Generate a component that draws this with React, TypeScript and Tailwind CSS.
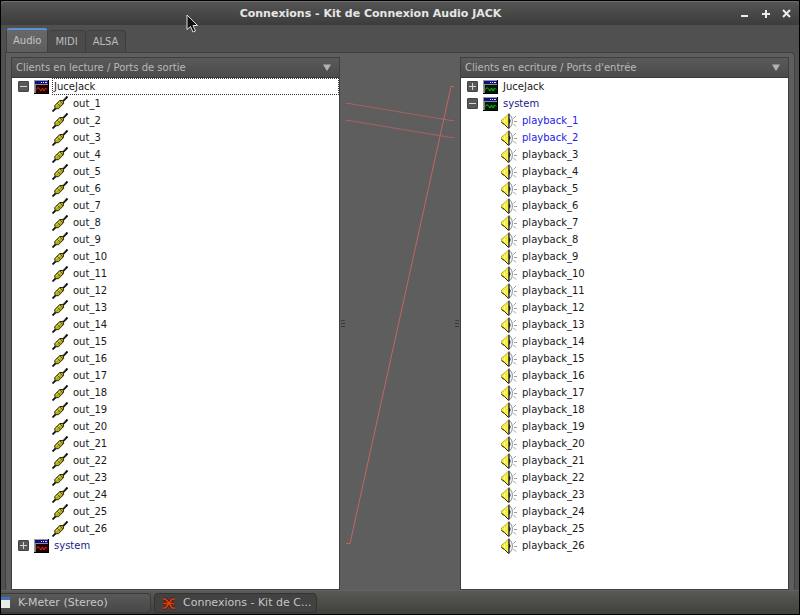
import { useState } from 'react';

type Kind = 'output' | 'input';

interface Port {
  name: string;
  highlighted?: boolean;
}

interface Client {
  name: string;
  ports: Port[];
  highlighted?: boolean;
  focused?: boolean;
}

function makePorts(prefix: string, count: number, highlighted = 0): Port[] {
  return Array.from({ length: count }, (_, i) => ({
    name: `${prefix}_${i + 1}`,
    highlighted: i < highlighted,
  }));
}

const OUTPUT_CLIENTS: Client[] = [
  { name: 'JuceJack', ports: makePorts('out', 26), focused: true },
  { name: 'system', ports: [], highlighted: true },
];

const INPUT_CLIENTS: Client[] = [
  { name: 'JuceJack', ports: [] },
  { name: 'system', ports: makePorts('playback', 26, 2), highlighted: true },
];

const TABS = ['Audio', 'MIDI', 'ALSA'];

function ClientIcon({ kind }: { kind: Kind }) {
  return (
    <svg viewBox="0 0 15 14" className="h-[14px] w-[15px] shrink-0" shapeRendering="crispEdges" aria-hidden="true">
      <rect width="15" height="14" fill="#000" />
      <path d="M0 0h14v1H1v12H0z" fill="#9a9a9a" />
      <rect x="1" y="1" width="13" height="3" fill="#10108a" />
      <path d="M7 2h1v1H7zM9 2h1v1H9zM11 2h2v1h-2z" fill="#e8e8ff" />
      <rect x="1" y="4" width="13" height="1" fill="#8c8c8c" />
      <rect x="1" y="5" width="1" height="8" fill="#777" />
      <rect x="2" y="5" width="12" height="8" fill={kind === 'output' ? '#240000' : '#001c00'} />
      <path
        d="M2.500 9.500L4 7.500l1.500 1.500L7 11l1.500-3L10 11l1.500-3L13 9.500"
        fill="none"
        stroke={kind === 'output' ? '#d8321a' : '#1fb82c'}
        shapeRendering="auto"
      />
    </svg>
  );
}

function PlugIcon() {
  return (
    <svg viewBox="0 0 16 16" className="size-4 shrink-0" aria-hidden="true">
      <path d="M10 6l5.500-5.500" stroke="#111" strokeWidth="2" />
      <path d="M11 4l2.500-2.500" stroke="#999" strokeWidth="0.800" />
      <path d="M0.500 15.500L4 12" stroke="#111" strokeWidth="1.800" />
      <path d="M2.800 11.500v-2l5-5h2.500l1.200 1.200v2l-5 5h-2.500z" fill="#b5ae1c" stroke="#2c2b10" />
      <path d="M4.300 9.800L8.700 5.400" stroke="#e4e068" />
      <path d="M5 7l3.500 3.500M7.500 4.500l3.500 3.500" stroke="#55520f" strokeWidth="0.900" />
    </svg>
  );
}

function SpeakerIcon() {
  return (
    <svg viewBox="0 0 16 16" className="size-4 shrink-0" aria-hidden="true">
      <path d="M7.500 1L3.500 5 0.500 7v2.500l3 2 4 4z" fill="#f6f03c" stroke="#a09a28" strokeWidth="0.800" />
      <path d="M3.500 6.500v3.500" stroke="#fffcae" />
      <path d="M0.500 9.500l3 2L7.500 15.500" fill="none" stroke="#222" />
      <path d="M8 1.500c4.500 2 4.500 11.500 0 13.500z" fill="#fafafa" stroke="#8a8a8a" />
      <path d="M8 0.500v15" stroke="#111" />
      <path d="M8 5.500c2 0.500 2 4.500 0 5z" fill="#222" />
      <path d="M12.500 5.500L15 3M13 8.500h3M12.500 11l2.500 2.500" stroke="#9a9a9a" />
    </svg>
  );
}

function PatchIcon() {
  return (
    <svg viewBox="0 0 16 14" className="h-[14px] w-4 shrink-0" fill="none" aria-hidden="true">
      <path d="M2 3h2.500L8 7l3-4h3M2 12h2.500L8 7l3 5h3M2 7.500h11" stroke="#4a1608" strokeWidth="3" />
      <path d="M2 3h2.500L8 7l3-4h3M2 12h2.500L8 7l3 5h3M2 7.500h11" stroke="#dc4216" strokeWidth="1.700" />
    </svg>
  );
}

function ClientNode({ client, kind }: { client: Client; kind: Kind }) {
  const [open, setOpen] = useState(client.ports.length > 0);

  return (
    <li>
      <div className="flex h-[17px] items-center pl-1.5">
        <button
          type="button"
          aria-expanded={open}
          aria-label={`Toggle ${client.name}`}
          onClick={() => setOpen(!open)}
          className="mr-[5px] flex size-[11px] shrink-0 items-center justify-center rounded-[1px] border border-[#444] bg-[#585858]"
        >
          <svg viewBox="0 0 7 7" className="size-[7px]" stroke="#d8d8d8" shapeRendering="crispEdges" aria-hidden="true">
            <path d={open ? 'M0 3.500h7' : 'M0 3.500h7M3.500 0v7'} />
          </svg>
        </button>
        <ClientIcon kind={kind} />
        <span
          className={`ml-[3px] flex h-[17px] grow items-center border border-dotted pl-px ${
            client.focused ? 'border-[#333]' : 'border-transparent'
          } ${client.highlighted ? 'text-[#1a1a8c]' : 'text-[#1a1a1a]'}`}
        >
          {client.name}
        </span>
      </div>
      {open && (
        <ul>
          {client.ports.map((port) => (
            <li
              key={port.name}
              className={`flex h-[17px] items-center gap-[5px] pl-10 ${port.highlighted ? 'text-[#2222e8]' : 'text-[#1a1a1a]'}`}
            >
              {kind === 'output' ? <PlugIcon /> : <SpeakerIcon />}
              {port.name}
            </li>
          ))}
        </ul>
      )}
    </li>
  );
}

function ClientTree({ title, clients, kind }: { title: string; clients: Client[]; kind: Kind }) {
  return (
    <section className="flex min-w-0 flex-col border border-[#3e3e3e] bg-white">
      <button
        type="button"
        className="flex h-5 shrink-0 items-center justify-between border-b border-[#3a3a3a] bg-linear-to-b from-[#5a5a5a] to-[#4b4b4b] pr-2 pl-1 text-[#b9b9b9]"
      >
        {title}
        <svg viewBox="0 0 8 7" className="h-[7px] w-2" aria-hidden="true">
          <path d="M0 0.500h8L4 7z" fill="#b4b4b4" />
        </svg>
      </button>
      <ul className="grow">
        {clients.map((client) => (
          <ClientNode key={client.name} client={client} kind={kind} />
        ))}
      </ul>
    </section>
  );
}

function Grip() {
  return (
    <div className="flex flex-col gap-0.5">
      <div className="h-px w-1 bg-[#3a3a3a]" />
      <div className="h-px w-1 bg-[#3a3a3a]" />
      <div className="h-px w-1 bg-[#3a3a3a]" />
    </div>
  );
}

function Cables() {
  return (
    <div className="relative flex items-center justify-between px-px">
      <Grip />
      <Grip />
      <svg className="absolute inset-0 size-full" fill="none" stroke="#c46464" aria-hidden="true">
        <path d="M6 46.500h3L111 63.500h3" strokeOpacity="0.700" />
        <path d="M6 63.500h3L111 80.500h3" strokeOpacity="0.700" />
        <path d="M6 486.500h4L111 29.500h3" />
      </svg>
    </div>
  );
}

export default function App() {
  const [tab, setTab] = useState('Audio');

  return (
    <div className="flex min-h-screen flex-col border border-black bg-[#505050] font-['DejaVu_Sans',sans-serif] text-[10px] leading-4">
      <header className="relative flex h-6 shrink-0 items-center rounded-t border-t border-[#707070] bg-linear-to-b from-[#545454] to-[#3c3c3c] pr-2">
        <h1 className="grow text-center text-[11px] font-bold text-[#e6e6e6]">Connexions - Kit de Connexion Audio JACK</h1>
        <div className="flex items-center gap-3">
          <button type="button" aria-label="Minimize" className="size-[9px]">
            <svg viewBox="0 0 9 9" stroke="#ececec" strokeWidth="2" aria-hidden="true">
              <path d="M1 7h7" />
            </svg>
          </button>
          <button type="button" aria-label="Maximize" className="size-[9px]">
            <svg viewBox="0 0 9 9" stroke="#ececec" strokeWidth="2" aria-hidden="true">
              <path d="M1 5h8M5 1v8" />
            </svg>
          </button>
          <button type="button" aria-label="Close" className="size-[9px]">
            <svg viewBox="0 0 9 9" stroke="#ececec" strokeWidth="2" aria-hidden="true">
              <path d="M1 1l7 7M8 1L1 8" />
            </svg>
          </button>
        </div>
        {/* mouse pointer */}
        <svg viewBox="0 0 12 19" className="absolute top-3 left-[185px] z-10 h-[19px] w-3" aria-hidden="true">
          <path d="M1 1v14.500l3.500-3 2.500 5.500 2.500-1-2.500-5.500h4.500z" fill="#111" stroke="#e0e0e0" />
        </svg>
      </header>

      <main className="flex grow flex-col px-1 pt-[3px]">
        <div role="tablist" className="flex items-end pl-px">
          {TABS.map((name) => (
            <button
              key={name}
              type="button"
              role="tab"
              aria-selected={tab === name}
              onClick={() => setTab(name)}
              className={
                tab === name
                  ? 'h-6 rounded-t-sm border-x border-t-2 border-x-[#404040] border-t-[#5b93d6] bg-linear-to-b from-[#686868] to-[#5e5e5e] px-1.5 text-[#c4c4c4]'
                  : 'h-[22px] rounded-t-sm border-t border-r border-[#3e3e3e] bg-[#4b4b4b] px-[7px] text-[#bcbcbc]'
              }
            >
              {name}
            </button>
          ))}
        </div>
        <div className="flex grow flex-col rounded-tr border-x border-t border-[#404040] bg-[#5e5e5e] px-[5px] pt-1">
          <div className="grid grow grid-cols-[1fr_120px_1fr]">
            <ClientTree title="Clients en lecture / Ports de sortie" clients={OUTPUT_CLIENTS} kind="output" />
            <Cables />
            <ClientTree title="Clients en ecriture / Ports d'entrée" clients={INPUT_CLIENTS} kind="input" />
          </div>
        </div>
      </main>

      <footer className="flex h-6 shrink-0 items-center gap-[3px] border-t border-[#62625e] bg-linear-to-b from-[#5a5a55] to-[#41413c] text-[11px] whitespace-nowrap text-[#c6c6c6]">
        <button
          type="button"
          className="flex h-5 w-[150px] items-center gap-2 rounded-r-sm border border-l-0 border-[#3a3a3a] bg-linear-to-b from-[#595959] to-[#474747]"
        >
          <svg viewBox="0 0 9 11" className="h-[11px] w-[9px]" aria-hidden="true">
            <rect width="9" height="11" fill="#eceae4" />
            <rect width="9" height="3" fill="#3b73bd" />
          </svg>
          K-Meter (Stereo)
        </button>
        <button
          type="button"
          className="flex h-5 w-[163px] items-center gap-1.5 rounded-sm border border-[#333] bg-[#424242] px-1.5"
        >
          <PatchIcon />
          Connexions - Kit de C...
        </button>
      </footer>
    </div>
  );
}
